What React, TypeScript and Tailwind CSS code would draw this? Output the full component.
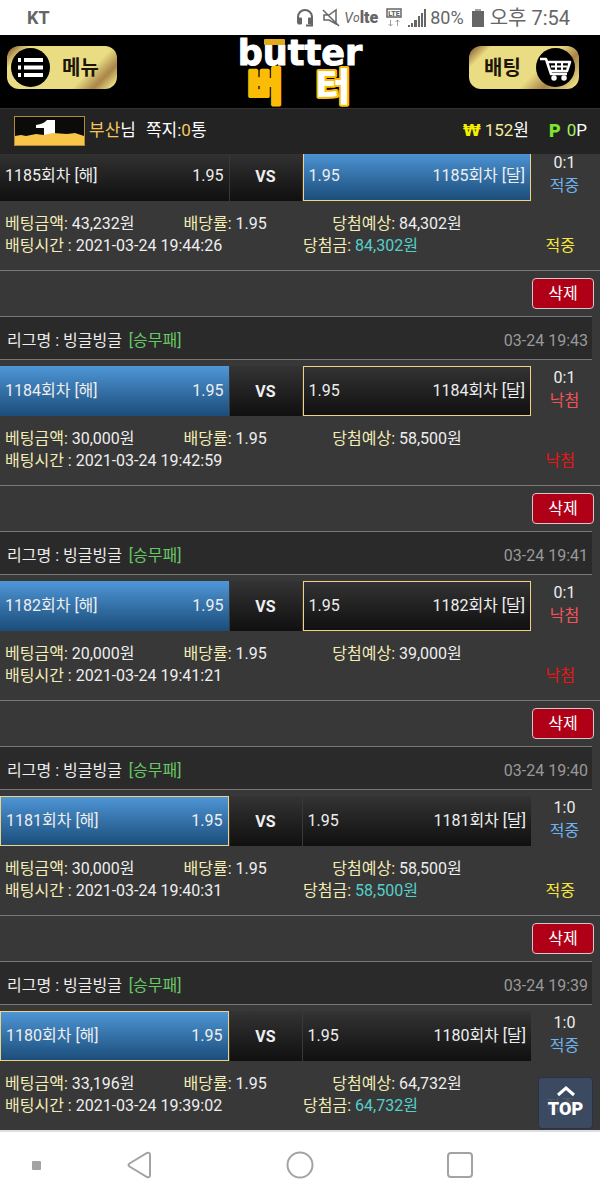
type Result = 'hit' | 'miss';

interface Bet {
    round: string;
    pick: 'home' | 'away';
    marked: 'home' | 'away';
    score: string;
    result: Result;
    amount: string;
    time: string;
    expected: string;
    payout?: string;
    date?: string;
}

const bets: Bet[] = [
    { round: '1185', pick: 'away', marked: 'away', score: '0:1', result: 'hit', amount: '43,232', time: '2021-03-24 19:44:26', expected: '84,302', payout: '84,302' },
    { round: '1184', pick: 'home', marked: 'away', score: '0:1', result: 'miss', amount: '30,000', time: '2021-03-24 19:42:59', expected: '58,500', date: '03-24 19:43' },
    { round: '1182', pick: 'home', marked: 'away', score: '0:1', result: 'miss', amount: '20,000', time: '2021-03-24 19:41:21', expected: '39,000', date: '03-24 19:41' },
    { round: '1181', pick: 'home', marked: 'home', score: '1:0', result: 'hit', amount: '30,000', time: '2021-03-24 19:40:31', expected: '58,500', payout: '58,500', date: '03-24 19:40' },
    { round: '1180', pick: 'home', marked: 'home', score: '1:0', result: 'hit', amount: '33,196', time: '2021-03-24 19:39:02', expected: '64,732', payout: '64,732', date: '03-24 19:39' },
];

const StatusBar = () => (
    <div className="flex h-[35px] items-center justify-between bg-white pr-[30px] pl-[27px] text-[#666]">
        <span className="text-lg font-bold">KT</span>
        <div className="flex items-center">
            <svg className="h-5 w-[18px]" viewBox="0 0 18 20" fill="none" stroke="currentColor" strokeWidth="2">
                <path d="M2 15V9a7 7 0 0 1 14 0v8.500h-6" />
                <path d="M2 10h3.500v6H2zM12.500 10H16v6h-3.500z" fill="currentColor" strokeWidth="1" />
            </svg>
            <svg className="ml-2 h-5 w-[18px]" viewBox="0 0 18 20" fill="none" stroke="currentColor" strokeWidth="1.5">
                <path d="M2 7h5l7-5v14l-7-4H2zM1 2l16 16" />
            </svg>
            <span className="ml-1 flex items-center">
                <span className="text-sm italic">V</span>
                <span className="text-xs italic">o</span>
                <span className="text-base font-black">lte</span>
            </span>
            <svg className="ml-2 h-5 w-4" viewBox="0 0 16 20" fill="none" stroke="currentColor">
                <rect x="1" y="1" width="14" height="8" strokeWidth="1.500" />
                <text x="8" y="8" fontSize="7" fontWeight="900" textAnchor="middle" fill="currentColor" stroke="none">LTE</text>
                <path d="M4.500 12v6M2.500 16l2 2 2-2M11.500 18v-6M9.500 14l2-2 2 2" opacity=".6" />
            </svg>
            <svg className="ml-1.5 h-5 w-[18px]" viewBox="0 0 18 20" fill="currentColor">
                <path d="M0 17h2v2H0zM3 15h2v4H3zM6 12h3v7H6zM10 8h2v11h-2zM13 5h2v14h-2zM16 1h2v18h-2z" />
            </svg>
            <span className="ml-1 text-lg">80%</span>
            <svg className="ml-2 h-5 w-3" viewBox="0 0 12 20" fill="currentColor">
                <path d="M3 3h6v-2H3z" opacity=".6" />
                <path d="M0 3h12v16H0z" />
            </svg>
            <span className="ml-1.5 text-xl">오후 7:54</span>
        </div>
    </div>
);

const Logo = () => (
    <svg className="ml-3.5 h-[73px] w-[134px]" viewBox="0 0 134 73" role="img" aria-label="butter 버터">
        <text x="32" y="65" textAnchor="middle" fontSize="38" fontWeight="900" fill="#fbbc05" stroke="#fbbc05" strokeWidth="4" strokeLinejoin="round" paintOrder="stroke">버</text>
        <text x="100" y="65" textAnchor="middle" fontSize="38" fontWeight="900" fill="#fff" stroke="#fbbc05" strokeWidth="4" strokeLinejoin="round" paintOrder="stroke">터</text>
        <text x="67" y="30" textAnchor="middle" fontFamily="DejaVu Sans" fontSize="35" fontWeight="700" fill="#fff" stroke="#fff" strokeWidth="1" strokeLinejoin="round">butter</text>
        <rect x="31" y="4" width="21" height="6" rx="1" fill="#e2aa1e" />
    </svg>
);

const Header = () => (
    <header className="flex h-[73px] items-start justify-between bg-black pr-[21px] pl-[7px]">
        <button className="mt-[11px] flex h-[43px] w-[110px] items-center rounded-xl bg-[linear-gradient(135deg,#79471f_0%,#eadc83_15%,#eadc83_70%,#a98549_84%,#eadc83_95%)] pl-1 text-xl font-bold text-[#1c1608]">
            <svg className="mr-3 size-[39px]" viewBox="0 0 39 39">
                <circle cx="19.500" cy="19.500" r="19.500" fill="#000" />
                <path d="M7 12h3M7 19.500h3M7 27h3M13 12h19M13 19.500h19M13 27h19" stroke="#fff" strokeWidth="4" />
            </svg>
            메뉴
        </button>
        <Logo />
        <button className="mt-[11px] flex h-[43px] w-[110px] items-center justify-between rounded-xl bg-[linear-gradient(135deg,#79471f_0%,#eadc83_15%,#eadc83_60%,#a98549_76%,#eadc83_95%)] pr-1 pl-[15px] text-xl font-bold text-[#1c1608]">
            배팅
            <svg className="size-[39px]" viewBox="0 0 39 39" fill="none" stroke="#fff" strokeWidth="2.500">
                <circle cx="19.500" cy="19.500" r="19.500" fill="#000" stroke="none" />
                <path d="M4 11h6l5 15h16M11 14h23l-3 9H14" strokeLinejoin="round" />
                <path d="M15 18.500h16M20 15v7M26 15v7" strokeWidth="2" />
                <circle cx="18" cy="30" r="1.500" />
                <circle cx="28" cy="30" r="1.500" />
            </svg>
        </button>
    </header>
);

const UserBar = () => (
    <div className="relative z-10 flex h-[46px] items-center border-t border-[#333] bg-[#232323] pr-[13px] pb-0.5 pl-3.5 text-[17px] text-white">
        <svg className="mr-1 h-[30px] w-[71px]" viewBox="0 0 71 30">
            <rect x=".5" y=".5" width="70" height="29" fill="#0b0b0b" stroke="#b48b35" />
            <path d="M22 9q8-1 11-5h8v17H30v-9h-8z" fill="#fff" />
            <path d="M1 20l6-1 5 1 10-2 8 1 9-2 14 1 8-1 6 2 3 1v9H1z" fill="#f7c548" />
        </svg>
        <span className="text-[#f5c65b]">부산</span>님
        <span className="ml-2.5">쪽지:<span className="text-[#f5c65b]">0</span>통</span>
        <span className="ml-auto flex items-center gap-1">
            <b className="font-[DejaVu_Sans] text-base text-[#f5ef00]">₩</b>
            <span><span className="text-[#f3e8a0]">152</span>원</span>
        </span>
        <span className="ml-5 flex items-center gap-1.5">
            <b className="text-lg font-black text-[#7ee52f]">P</b>
            <span><span className="text-[#a5f25b]">0</span>P</span>
        </span>
    </div>
);

const cellStyle = (picked: boolean, marked: boolean) => {
    const fill = picked ? 'bg-linear-to-b from-[#4f97d8] to-[#1b4d7a]' : 'bg-linear-to-b from-[#343434] to-[#101010]';
    return `${fill} ${marked ? 'border border-[#f0d283]' : ''}`;
};

const MatchRow = ({ bet }: { bet: Bet }) => (
    <div className="grid h-[50px] grid-cols-[1fr_74px_1fr_69px]">
        <div className={`flex items-center justify-between bg-origin-border px-[5px] ${cellStyle(bet.pick === 'home', bet.marked === 'home')}`}>
            <span>{bet.round}회차 [해]</span>
            <span>1.95</span>
        </div>
        <div className="flex items-center justify-center border-x border-[#383838] bg-linear-to-b from-[#343434] to-[#101010] pt-0.5 font-bold">VS</div>
        <div className={`flex items-center justify-between bg-origin-border px-[5px] ${cellStyle(bet.pick === 'away', bet.marked === 'away')}`}>
            <span>1.95</span>
            <span>{bet.round}회차 [달]</span>
        </div>
        <div className="flex flex-col items-center pr-0.5 leading-[23px]">
            <span>{bet.score}</span>
            <span className={bet.result === 'hit' ? 'text-[#6fb3ee]' : 'text-[#f4525a]'}>{bet.result === 'hit' ? '적중' : '낙첨'}</span>
        </div>
    </div>
);

const BetDetails = ({ bet }: { bet: Bet }) => (
    <div className="h-[69px] pt-3 pl-[5px] leading-[22px]">
        <div className="flex">
            <span className="w-[30%]"><span className="text-[#f3edb5]">베팅금액:</span> {bet.amount}원</span>
            <span className="w-1/4"><span className="text-[#f3edb5]">배당률:</span> 1.95</span>
            <span><span className="text-[#f3edb5]">당첨예상:</span> {bet.expected}원</span>
        </div>
        <div className="flex pr-[25px]">
            <span className="w-[298px]"><span className="text-[#f3edb5]">배팅시간 :</span> {bet.time}</span>
            {bet.payout && (
                <span><span className="text-[#f3edb5]">당첨금:</span> <span className="text-[#55cfca]">{bet.payout}원</span></span>
            )}
            <span className={`ml-auto ${bet.result === 'hit' ? 'text-[#f7e63c]' : 'text-[#ed1515]'}`}>{bet.result === 'hit' ? '적중' : '낙첨'}</span>
        </div>
    </div>
);

const BetCard = ({ bet }: { bet: Bet }) => (
    <article>
        {bet.date && (
            <>
                <div className="flex h-[46px] items-center justify-end border-t border-[#777] pr-1.5">
                    <button className="h-[31px] w-[62px] rounded border border-[#d0c8ca] bg-[#b00018] text-white">삭제</button>
                </div>
                <div className="mr-2 mb-1.5 flex h-11 items-center justify-between border-y border-[#777] bg-[#2a2a2a] pt-1.5 pr-1 pl-[7px]">
                    <span>리그명 : 빙글빙글 <span className="ml-[3px] text-[#69c765]">[승무패]</span></span>
                    <span className="text-[#999]">{bet.date}</span>
                </div>
            </>
        )}
        <MatchRow bet={bet} />
        <BetDetails bet={bet} />
    </article>
);

const NavBar = () => (
    <nav className="flex h-[70px] items-center border-t-2 border-[#dedee2] bg-white pr-[60px] pb-0.5 text-[#a3a3a3]">
        <button className="w-[60px] pl-8" aria-label="메뉴 고정">
            <span className="block size-[9px] rounded-[1px] bg-[#a3a3a3]" />
        </button>
        <div className="grid flex-1 grid-cols-3 justify-items-center">
            <button aria-label="뒤로">
                <svg className="size-7" viewBox="0 0 28 28" fill="none" stroke="currentColor" strokeWidth="2">
                    <path d="M3.500 12.500 21 2q3-1 3 2v20q0 3-3 2L3.500 15.500q-2-1.500 0-3z" />
                </svg>
            </button>
            <button aria-label="홈">
                <svg className="size-7" viewBox="0 0 28 28" fill="none" stroke="currentColor" strokeWidth="2">
                    <circle cx="14" cy="14" r="12.500" />
                </svg>
            </button>
            <button aria-label="최근 앱">
                <svg className="size-7" viewBox="0 0 28 28" fill="none" stroke="currentColor" strokeWidth="2">
                    <rect x="2" y="2" width="24" height="24" rx="3" />
                </svg>
            </button>
        </div>
    </nav>
);

export default function App() {
    return (
        <div className="flex min-h-screen flex-col bg-[#383838] font-[Roboto,'Noto_Sans_CJK_KR',sans-serif]">
            <StatusBar />
            <Header />
            <UserBar />
            <main className="relative -mt-[3px] flex-1 text-base text-[#eee]">
                {bets.map((bet) => (
                    <BetCard key={bet.round} bet={bet} />
                ))}
                <a href="#top" className="absolute right-[7px] bottom-px flex h-[52px] w-[55px] flex-col items-center justify-center rounded-sm border border-[#26334a] bg-[#3c4b66]/90 pb-1 text-lg leading-4 font-black text-white">
                    <svg className="mb-1 h-3 w-5" viewBox="0 0 20 12" fill="none" stroke="currentColor" strokeWidth="3">
                        <path d="M2 10l8-7 8 7" />
                    </svg>
                    TOP
                </a>
            </main>
            <NavBar />
        </div>
    );
}
